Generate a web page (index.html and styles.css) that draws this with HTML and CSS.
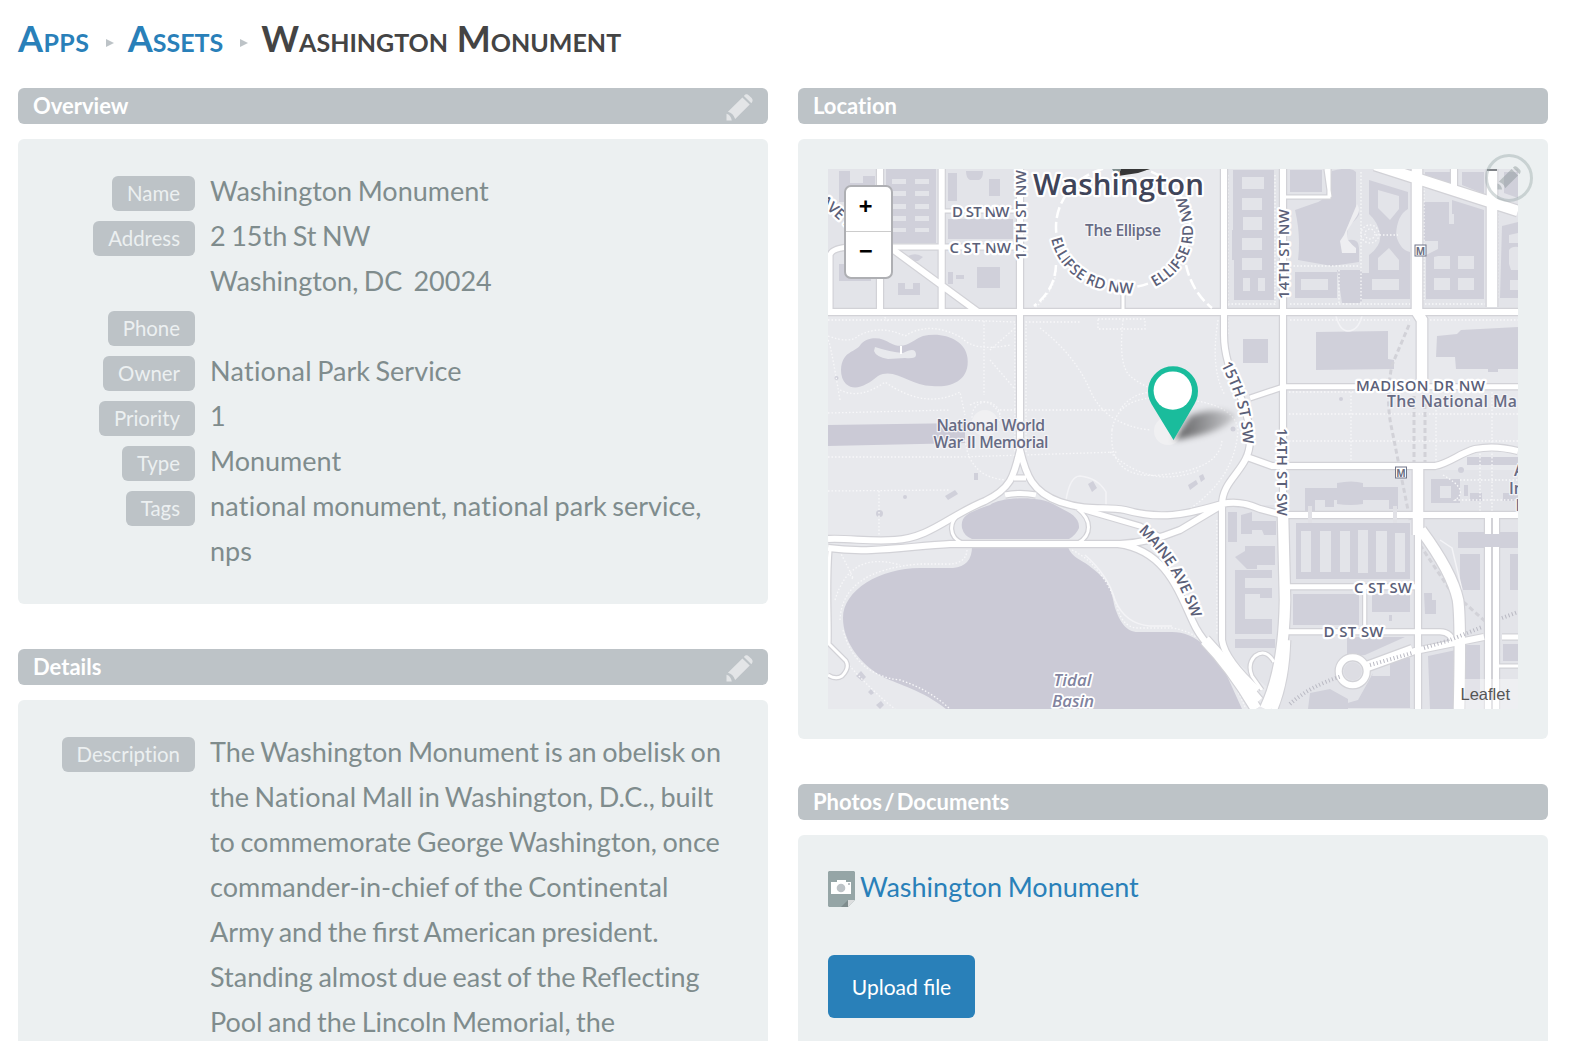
FILE: index.html
```html
<!DOCTYPE html>
<html lang="en">
<head>
<meta charset="utf-8">
<title>Washington Monument</title>
<link rel="stylesheet" href="styles.css">
</head>
<body>
<svg width="0" height="0" class="sprite">
  <symbol id="pencil" viewBox="0 0 28 28">
    <path d="M0.500 27.500V20.500Q5 21.500 6 27.500ZM2 18.500L17 3.500L24.600 11L9.500 26Q7.500 20 2 18.500ZM18.600 2C20.500 0 22 0 23.500 1.200L26.600 4.200C28 5.800 28 7.500 26.300 9.500Z"/>
  </symbol>
</svg>
<h1 class="crumbs"><a href="#">Apps</a><i></i><a href="#">Assets</a><i></i><span>Washington Monument</span></h1>
<main class="columns">
  <div class="column">
    <section>
      <h2 class="bar">Overview<svg class="edit"><use href="#pencil"/></svg></h2>
      <dl class="panel fields">
        <dt><span>Name</span></dt><dd>Washington Monument</dd>
        <dt><span>Address</span></dt><dd>2 15th St NW<br>Washington, DC&nbsp; 20024</dd>
        <dt><span>Phone</span></dt><dd></dd>
        <dt><span>Owner</span></dt><dd><span class="open">National</span> Park Service</dd>
        <dt><span>Priority</span></dt><dd>1</dd>
        <dt><span>Type</span></dt><dd>Monument</dd>
        <dt><span>Tags</span></dt><dd><span class="open">national</span> monument, <span class="open">national</span> park service, nps</dd>
      </dl>
    </section>
    <section>
      <h2 class="bar">Details<svg class="edit"><use href="#pencil"/></svg></h2>
      <dl class="panel fields">
        <dt><span>Descript&zwnj;ion</span></dt>
        <dd>The Washington Monument is an obelisk on the <span class="open">National</span> Mall in Washington, D.C., built to commemorate George Washington, once commander-in-chief of the <span class="open">Continental</span> Army and the first American president. Standing almost due east of the Reflect&zwnj;ing Pool and the Lincoln Memorial, the</dd>
      </dl>
    </section>
  </div>
  <div class="column">
    <section>
      <h2 class="bar">Locat&zwnj;ion</h2>
      <div class="panel location">
        <div class="map">
<svg class="tiles" viewBox="828 169 690 540">
  <defs>
    <filter id="soft" x="-30%" y="-50%" width="160%" height="200%"><feGaussianBlur stdDeviation="3"/></filter>
    <linearGradient id="shade" x1="0" x2="1"><stop offset="0" stop-color="#000" stop-opacity=".6"/><stop offset="1" stop-color="#000" stop-opacity=".12"/></linearGradient>
    <g id="roads">
      <path class="w3" d="M943 211H1020M1329 169V197H1283M1326 169L1330 197M1495 666H1518M960 514C948 522 949 537 962 543M1078 509C1092 520 1092 535 1078 543M830 550C827 590 830 620 829 644L846 661Q850 668 842 676Q836 680 828 675M1364.700 587V631M1123 288V312M1274 662Q1266 648 1255 656Q1247 664 1252 676L1262 690"/>
      <path class="w5" d="M830 312V255Q832 248 850 247H1020M1288 586.700H1418M1288 631.700H1440Q1452 632 1454 645M1005 495Q1020 492 1036 495M1014 478H1026M1078 508L1140 526L1160 537M1502 637H1518M1283 386.700H1518M1250 398L1283 387"/>
      <path class="w6" d="M828 312H1518M880 169V312M941.700 169V312M820 196L978 312M1020 169V453M1224 169V335C1224 375 1250 400 1250 440C1250 470 1222 478 1222 505V640Q1225 660 1258 690M1283 169V520M1454 169V195M1020 450C1014 475 1012 488 985 501C950 515 930 538 895 540C870 542 850 538 828 539M1020 450C1026 475 1032 492 1060 502C1090 512 1105 506 1125 510C1160 520 1185 515 1222 504Q1240 500 1260 509L1283 515H1518M828 548C870 554 910 546 950 544H1120Q1148 543 1180 530L1222 505M1118 544C1165 550 1178 590 1193 622Q1203 645 1235 670L1260 700M1247 457L1272 466H1435C1450 463 1460 453 1475 449Q1495 445 1518 451M1418 515V709M1488 517V534M1496 517V534M1488 547V709M1496 547V709M1368 668L1415 651L1484 637M1366 665L1412 648"/>
      <circle class="w6" cx="1352.700" cy="671.300" r="14"/>
      <path class="w9" d="M1417 169V312L1422 320V386M1418 466V535M1375 165L1518 211M1492 169V307M1283 515L1285 600Q1284 670 1265 709M1285 640Q1284 680 1272 709M1421 530Q1452 572 1458 600Q1461 620 1459 709M1205 640Q1232 668 1256 709"/>
    </g>
    <path id="e1" d="M1051 239C1058 270 1088 297 1142 293"/>
    <path id="e2" d="M1155 287C1194 266 1200 235 1186 197"/>
    <path id="s15" d="M1221 365C1231 385 1243 408 1243 450"/>
    <path id="mn" d="M1138 531C1165 557 1180 582 1194 624"/>
  </defs>
  <rect x="828" y="169" width="690" height="540" fill="#e8e9ed"/>
  <path class="block" d="M828 169H1020V312H828ZM1283 169H1518V312H1283ZM1222 169H1283V312H1222ZM1222 505H1283V700L1222 650ZM1283 470H1518V709H1270Z"/>
  <g class="building">
    <path d="M839 171h11v12h13v-7h12v26h-36zM886 169h50v74h-50zM948 173h9v28h-9zM966 171h17q0 8-4 9h-9q-4-2-4-9zM989 179h11v17h-11zM948 219h65v20h-65zM977 267h23v21h-23zM948 272h5v12h-5zM956 275h8v4h-8zM898 283h7v6h8v-6h7v12h-22zM839 264h32v17h-32zM908 256q8-4 15 1l-5 4h-6z"/>
    <path d="M1233 170h41v130h-40v-40h-2v-30h1zM1243 339h25v24h-25zM1290 170h32v22h-32zM1315 203Q1329 200 1330 178L1332 171Q1350 166 1356 172V208Q1362 212 1357 218L1347 228L1348 240Q1359 238 1359 248V262L1332 266L1298 260Q1301 235 1295 210ZM1369 180L1408 192V209Q1397 215 1396 235Q1400 250 1410 252V299H1362V273H1369V255Q1382 245 1380 234Q1378 222 1369 214ZM1295 272h42v26h-42zM1337 270h25v33h-20zM1424 202h25v22h5v-10h-2v-14l32 10v89h-58v-44l12-6v-8h-14zM1502 226l16-4v76h-18zM1316 332l72-1v28l6 1v9l-78 1zM1437 336l20-2 4-4 57-3v42h-20v3h-10v-3h-32l-1-12h-19zM1425 172l25 0v12l-25-9zM1462 172h22v22l-22-9zM1504 172h14v26l-14-5z"/>
    <path d="M1228 512h9v30h-9zM1241 515l11-3v9h24v14h-12l-2-5h-10v4h-11zM1235 557l10-6v-5h30v19h-18v4h-10zM1235 570h37v8h-27v10h27v10h-12v-4h-15v25h27v15h-37zM1235 639h40v9h-40z"/>
    <path d="M1305 488h32v-5q15-3 26 0v4h35v22h-9v-9h-26v4q-12 2-26 0v-4h-22v13h-10zM1325 499h9v8h-9zM1296 523h114v56h-114zM1293 594h66v31h-66zM1372 594h38v18h-38zM1389 615h3v6h-3zM1347 637h58l-40 18-18 2zM1372 676h18v-18h20v50h-80l28-8 15-27zM1310 693l20-4 18 10v10h-40zM1428 656l28-6v59h-26zM1464 645h16v55h-16zM1503 644h15v17h-15zM1458 532h60v16h-60zM1460 554h20v36h-20zM1510 554h8v36h-8zM1424 593h8v7h4v14h-11zM1431 479h29v24h-29zM1467 457h51v8h-51zM1470 493h12v8h-12zM1503 493h15v8h-15zM1464 485h4v11h-4z"/>
    <path d="M1088 484l5-3 4 7-5 4zM945 496l10-6 3 4-10 6zM974 473h4v7h-4zM1188 485l8-5 2 4-8 6zM1199 476l4-2 2 5-4 3z"/>
    <circle cx="879.500" cy="513.500" r="3.500"/><circle cx="905" cy="497" r="2"/><circle cx="836.500" cy="378" r="2"/><circle cx="1341" cy="399" r="2"/><circle cx="1233" cy="429" r="2.500"/><circle cx="1461" cy="470" r="3"/>
    <path d="M856 676l5-5 5 6-4 4zM876 705l5-4 3 4-4 4zM868 692l3-3 3 4-3 2zM1174 642l25 12-2 3-25-12zM1187 645l4 2-7 9-4-2z"/>
  </g>
  <g class="court">
    <path d="M892 179h14v5h-14zM915 179h14v5h-14zM892 191h14v5h-14zM915 191h14v5h-14zM892 204h14v5h-14zM915 204h14v5h-14zM892 216h14v5h-14zM915 216h14v5h-14zM892 228h14v4h-14zM915 228h14v4h-14z"/>
    <path d="M1242 177h22v12h-22zM1242 198h20v12h-20zM1243 217h19v13h-19zM1242 238h20v12h-20zM1242 258h20v12h-20zM1243 278h7v13h-7zM1258 278h7v13h-7z"/>
    <path d="M1378 190l21 6v13l-9 11-12-12zM1378 270v-12l11-10 10 12v10zM1301 279h27v11h-27zM1372 279h27v11h-27zM1434 257l4-1h12v13h-16zM1458 256h16v13h-16zM1434 278h16v12h-16zM1458 278h16v12h-16zM1509 250q3-4 9-3v23h-7l-2-6zM1510 280h8v10h-8zM1509 235l9-2v10h-9z"/>
    <path d="M1301 531h10v41h-10zM1320 531h11v41h-11zM1340 531h10v41h-10zM1358 530h10v43h-10zM1376 531h11v41h-11zM1395 533h10v39h-10zM1440 486h11v12h-11z"/>
    <path fill="#eeeef1" d="M1357 204q4 6 0 12l-10 15 1 9q4 5 8 8v5h-14l-2-12 4-6z"/>
  </g>
  <g class="water">
    <path d="M841 370C842 350 856 353 861 344C870 335 883 338 890 343C905 351 912 340 923 336C943 331 966 340 967.500 358C970 380 952 388 932 386C910 386 895 367 878 376C867 385 855 392 846 384Q841 379 841 370Z"/>
    <path d="M828 425L965 423V443L828 446ZM962 528C960 515 970 512 990 505C1000 497 1040 495 1055 505C1065 511 1080 515 1079 528Q1076 535 1069 539H972Q964 536 962 528Z"/>
    <path d="M972 547H1068C1072 558 1082 560 1088 565C1110 582 1110 585 1115 608C1120 622 1126 632 1138 632H1172C1195 632 1215 650 1228 678L1242 709H946C922 690 900 685 883 677C858 663 843 640 843 618C843 590 880 568 920 568H953Q972 566 972 547Z"/>
  </g>
  <path fill="#e8e9ed" d="M875 347Q890 352 903 353Q916 346 916 355Q916 359 905 358L888 359Q876 357 874 351Z"/>
  <path d="M901 346V354" stroke="#fff" stroke-width="2"/>
  <g class="paths">
    <path d="M828 320H960L1015 322V452M1026 452V322H1080M888 321L880 312M828 336Q850 344 858 336Q880 324 905 336Q930 320 962 338Q975 352 1010 345M840 400Q830 340 828 340M840 390Q860 400 885 382Q925 410 960 392L965 415M984 321V395M990 350L1015 328M990 360L1014 388M970 405Q990 395 1000 415M828 413L950 410M1000 410H1115M828 457H960L1118 452M828 491L950 490M879 491V537M965 440Q970 480 1010 480"/>
    <path d="M1030 312Q1058 290 1056 265M1098 319H1145V329H1098ZM1123 320Q1118 365 1130 376Q1150 392 1175 394M1218 320Q1210 370 1225 395M1040 328Q1075 355 1090 390T1150 430M1120 410Q1140 380 1190 400M1112 430Q1108 480 1160 475Q1220 470 1222 440M1112 430Q1118 395 1165 398Q1235 400 1238 430Q1235 480 1185 512M1110 452Q1150 490 1200 470"/>
    <path d="M1228 175V335M1275 175V305M1290 320H1410M1228 304H1275M1290 304H1410M1361 172V270M1290 266H1360M1339 270V304M1361 270V304M1376 235H1398M1425 304H1485M1430 320H1518M1289 392H1354M1289 414H1518M1289 441H1518M1351 392V465M1492 392V445M1436 410V465M1424 180V300M1498 195V300"/>
    <path d="M840 620Q842 570 920 564H945Q966 565 967 550M1072 550Q1082 555 1090 562Q1112 585 1118 610Q1124 628 1138 628H1172Q1205 632 1230 674L1246 709M835 600Q850 550 900 565M838 548Q860 590 850 575M840 655Q870 690 895 709M843 630Q855 675 900 680Q930 690 950 709M1217 520V634M1443 475Q1470 490 1455 500H1518M1460 480H1518M1480 450V512M1492 450V512"/>
    <circle cx="986" cy="416" r="14"/><circle cx="1370" cy="234" r="9"/><circle cx="1370" cy="234" r="5"/>
  </g>
  <path class="trail" d="M1066 500Q1070 476 1080 476Q1098 478 1106 492V508M1336 316Q1340 331 1348 331Q1358 331 1362 316M1085 555Q1108 575 1115 600Q1125 624 1150 626H1172M1440 540L1452 548L1462 590"/>
  <circle cx="1168" cy="431" r="14" fill="#f0f0f2"/><circle cx="985" cy="423" r="13" fill="#f0f0f2"/>
  <path class="tunnel" d="M1414 396V465M1425 396V465M1409 325L1392 365Q1385 400 1392 430L1410 520M1420 545L1450 590L1486 622"/>
  <use href="#roads" class="casing"/>
  <use href="#roads" class="road"/>
  <path class="rail" d="M1290 704Q1310 686 1342 676M1370 665L1412 653M1424 648L1450 640L1482 627M1502 618L1518 612"/>
  <ellipse class="drive" cx="1123" cy="227" rx="67" ry="61"/>
  <path class="drive" d="M1056 265Q1055 290 1034 306M1186 265Q1192 292 1212 308"/>
  <circle cx="1352.700" cy="671.300" r="9" fill="#dddde3"/>
  <path d="M1310 506V523M1395 506V523" stroke="#e1e1e6" stroke-width="4"/>
  <path d="M1112 169H1121L1117 176Z" fill="#7f8c8d"/><path d="M1118 176L1121 169H1150L1138 173Z" fill="#222" opacity=".9"/>
  <g class="labels">
    <text x="1033" y="194.500" class="city" textLength="171">Washington</text>
    <text x="952" y="217" textLength="57.500">D ST NW</text>
    <text x="949.500" y="252.500" textLength="61.500">C ST NW</text>
    <text transform="translate(1026 260) rotate(-90)" textLength="90">17TH ST NW</text>
    <text transform="translate(1288.500 299) rotate(-90)" textLength="90">14TH ST NW</text>
    <text transform="translate(1277 428) rotate(90)" textLength="88">14TH ST SW</text>
    <text transform="translate(819 202) rotate(42)">AVE NW</text>
    <text><textPath href="#e1" textLength="107">ELLIPSE RD NW</textPath></text>
    <text><textPath href="#e2" textLength="107">ELLIPSE RD NW</textPath></text>
    <text><textPath href="#s15" textLength="83">15TH ST SW</textPath></text>
    <text><textPath href="#mn" textLength="104">MAINE AVE SW</textPath></text>
    <text x="1356" y="390.700" textLength="129">MADISON DR NW</text>
    <text x="1354" y="592.500" textLength="58">C ST SW</text>
    <text x="1323.500" y="637" textLength="60">D ST SW</text>
    <g class="place">
      <text x="1085" y="235.500" textLength="76">The Ellipse</text>
      <text x="936.500" y="430.500" textLength="108.500">National World</text>
      <text x="933.500" y="448" textLength="115">War II Memorial</text>
      <text x="1387" y="407" textLength="130">The National Ma</text>
      <text x="1514" y="476">Air</text><text x="1509" y="493.500">In</text><text x="1515.500" y="511">I</text>
    </g>
    <g class="lake"><text x="1053.500" y="685.700" textLength="38">Tidal</text><text x="1052" y="707" textLength="42">Basin</text></g>
  </g>
  <g class="metro"><rect x="1415" y="245" width="11" height="11"/><rect x="1395.500" y="467" width="11" height="11"/><text x="1420.500" y="254.500">M</text><text x="1401" y="476.500">M</text></g>
  <path d="M1487 170H1497" stroke="#55585f" stroke-width="1.500"/>
  <path d="M1174 440L1190 416Q1215 406 1236 415Q1228 432 1174 440Z" fill="url(#shade)" filter="url(#soft)"/>
  <path d="M1173.500 440L1151.500 404A25 25 0 1 1 1194.500 404Z" fill="#1abc9c"/><circle cx="1172.800" cy="390.600" r="19.200" fill="#fff"/>
</svg>
          <div class="zoom"><a>+</a><a>−</a></div>
          <div class="credit">Leaflet</div>
        </div>
        <div class="round"><svg><use href="#pencil"/></svg></div>
      </div>
    </section>
    <section>
      <h2 class="bar tight">Photos / Documents</h2>
      <div class="panel files">
        <a class="file" href="#"><svg width="27" height="36" viewBox="0 0 27 36"><path d="M1 0H26L27 1V29L20 36H1L0 35V1Z" fill="#95a5a6"/><path d="M13 36L20 29V36Z" fill="#7f8c8d"/><path d="M20 29H27L20 36Z" fill="#dcdedf"/><path d="M3 11H9V9H18V11H23V23H3Z" fill="#fff"/><circle cx="13" cy="17" r="4.300" fill="#bdc3c7"/><rect x="20" y="12" width="2" height="2" fill="#bdc3c7"/></svg><span>Washington Monument</span></a>
        <button class="upload">Upload file</button>
      </div>
    </section>
  </div>
</main>
</body>
</html>
```
FILE: styles.css
```css
* { box-sizing: border-box; }
html, body { height: 100%; overflow: hidden; }
body { margin: 0; padding: 0 42px 0 18px; background: #fff; color: #7f8c8d; font: 27px/45px Lato, sans-serif; word-spacing: -1.4px; }
h1, h2, dl, dd { margin: 0; }
a { color: #2980b9; text-decoration: none; }
.sprite { display: block; }
.open { letter-spacing: .25px; }

.crumbs { display: flex; align-items: center; height: 88px; padding-bottom: 12px; font-size: 36px; font-weight: 700; font-variant: small-caps; color: #444; white-space: pre; word-spacing: 0; }
.crumbs a:first-child { letter-spacing: .4px; }
.crumbs i { margin: 10px 14px 0 16.5px; border: solid transparent; border-width: 4px 0 4px 8px; border-left-color: #bdc3c7; }
.crumbs span { margin-left: -.5px; }

.columns { display: grid; grid-template-columns: 750px 750px; gap: 30px; }
.column { display: flex; flex-direction: column; gap: 45px; }
.bar { display: flex; justify-content: space-between; align-items: center; height: 36px; margin-bottom: 15px; padding: 0 15px; border-radius: 6px; background: #bdc3c7; color: #fff; font-size: 22px; line-height: 36px; font-weight: 700; }
.tight { word-spacing: -3px; }
.edit { width: 27px; height: 27px; margin-top: 3px; fill: #e3e5e7; }
.panel { padding: 30px; border-radius: 6px; background: #ecf0f1; }

.fields { display: grid; grid-template-columns: 147px 1fr; column-gap: 15px; padding: 29px 40px 31px 30px; }
.fields dt { display: flex; justify-content: flex-end; align-items: flex-start; padding-top: 8.4px; }
.fields dt span { padding: 0 15px; border-radius: 6px; background: #bdc3c7; color: #ecf0f1; font-size: 20.4px; line-height: 34.6px; }
.fields dd { min-height: 45px; }

.location { position: relative; }
.map { position: relative; height: 540px; overflow: hidden; }
.tiles { display: block; width: 690px; height: 540px; }
.block { fill: #e3e4e9; }
.building { fill: #d0d0da; }
.court { fill: #e3e4e9; }
.water { fill: #cbcad6; }
.paths { fill: none; stroke: #f7f7f9; stroke-width: 1.3; stroke-dasharray: 1.5 2; }
.trail { fill: none; stroke: #f3f3f6; stroke-width: 1.5; }
.tunnel { fill: none; stroke: #d2d2d8; stroke-width: 3; stroke-dasharray: 5 3; }
.rail { fill: none; stroke: #b9b9c3; stroke-width: 4; stroke-dasharray: 1 2.5; }
#roads { fill: none; }
.w3 { stroke-width: calc(3px + var(--edge)); }
.w5 { stroke-width: calc(5px + var(--edge)); }
.w6 { stroke-width: calc(6px + var(--edge)); }
.w9 { stroke-width: calc(10.5px + var(--edge)); }
.casing { --edge: 2.4px; stroke: #d2d2d7; }
.road { --edge: 0px; stroke: #fff; }
.drive { fill: none; stroke: #fff; stroke-width: 2.5; stroke-dasharray: 11 4; }
.labels { font: 600 15px "Open Sans", "Noto Sans", sans-serif; word-spacing: .5px; fill: #5b6078; stroke: #fff; stroke-width: 4.5px; stroke-linejoin: round; paint-order: stroke; }
.labels .city { font-size: 29.5px; fill: #3f4459; }
.place { font-size: 15.8px; fill: #676b84; stroke: #f3f3f6; stroke-width: 2.5px; }
.lake { font-size: 17px; font-style: italic; fill: #8284a0; stroke: #fff; stroke-width: 3.5px; }
.metro { font: 700 10px "Open Sans", sans-serif; text-anchor: middle; fill: #6b6e80; }
.metro rect { fill: #fff; stroke: #73768a; stroke-width: 1; }

.zoom { position: absolute; left: 16px; top: 16px; width: 49px; border: 2px solid #aeafb3; border-radius: 7px; background: #fff; overflow: hidden; }
.zoom a { display: block; height: 45px; color: #000; font: 700 22px/38px "DejaVu Sans Mono", monospace; text-align: center; padding-right: 6px; }
.zoom a:first-child { border-bottom: 1px solid #ccc; }
.credit { position: absolute; right: 0; bottom: 0; width: 56px; height: 30px; background: rgba(255,255,255,.4); color: #555; font: 16.5px/30px "Liberation Sans", Arial, sans-serif; padding-right: 8px; display: flex; justify-content: flex-end; }
.round { position: absolute; left: 687px; top: 15px; width: 48px; height: 48px; border: 3px solid #95a5a6; border-radius: 50%; opacity: .4; display: flex; align-items: center; justify-content: center; }
.round svg { width: 24px; height: 24px; fill: #7f8c8d; }

.files { height: 206px; overflow: hidden; display: flex; flex-direction: column; align-items: flex-start; gap: 46px; border-radius: 6px 6px 0 0; }
.file { display: flex; gap: 5px; }
.file span { margin-top: -1px; }
.file svg { margin-top: 6px; }
.upload { flex: none; width: 147px; height: 63px; border: 0; border-radius: 6px; background: #2980b9; color: #fff; font: 21px Lato, sans-serif; }
```
